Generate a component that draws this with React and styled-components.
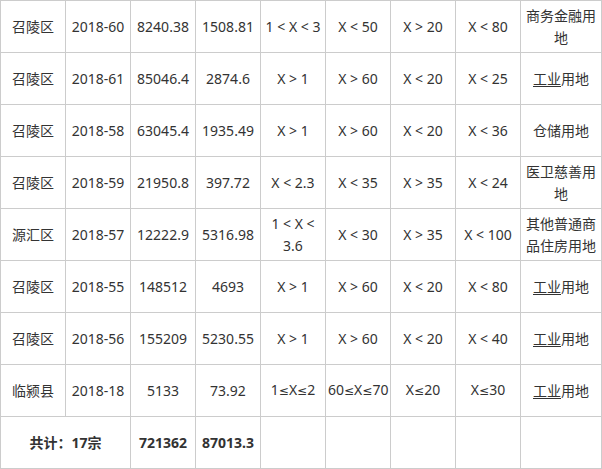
import React from 'react';
import styled, { createGlobalStyle } from 'styled-components';

const GlobalStyle = createGlobalStyle`
  html, body {
    margin: 0;
    padding: 0;
    background: #ffffff;
  }
  body {
    font-family: 'Noto Sans', 'DejaVu Sans', 'Noto Sans CJK SC', sans-serif;
    color: #333333;
  }
`;

/* 표 레이아웃 */
const Table = styled.table`
  border-collapse: collapse;
  table-layout: fixed;
  width: 601px;
  border-top: 1px solid #e8e8e8;
  border-left: 1px solid #e8e8e8;
`;

const Row = styled.tr`
  height: 52px;
`;

const Cell = styled.td`
  border: 1px solid #cccccc;
  padding: 0 2px;
  text-align: center;
  vertical-align: middle;
  font-size: 14px;
  line-height: 22px;
  white-space: nowrap;
  font-weight: ${(p) => (p.$bold ? 700 : 400)};
  color: #333333;
  box-sizing: border-box;
`;

const Link = styled.span`
  text-decoration: underline;
  text-underline-offset: 2px;
`;

const Le = styled.span`
  font-family: 'DejaVu Sans', sans-serif;
  font-size: 12px;
`;

const rows = [
  ['召陵区', '2018-60', '8240.38', '1508.81', '1 < X < 3', 'X < 50', 'X > 20', 'X < 80', ['商务金融用', '地']],
  ['召陵区', '2018-61', '85046.4', '2874.6', 'X > 1', 'X > 60', 'X < 20', 'X < 25', 'link'],
  ['召陵区', '2018-58', '63045.4', '1935.49', 'X > 1', 'X > 60', 'X < 20', 'X < 36', '仓储用地'],
  ['召陵区', '2018-59', '21950.8', '397.72', 'X < 2.3', 'X < 35', 'X > 35', 'X < 24', ['医卫慈善用', '地']],
  ['源汇区', '2018-57', '12222.9', '5316.98', ['1 < X <', '3.6'], 'X < 30', 'X > 35', 'X < 100', ['其他普通商', '品住房用地']],
  ['召陵区', '2018-55', '148512', '4693', 'X > 1', 'X > 60', 'X < 20', 'X < 80', 'link'],
  ['召陵区', '2018-56', '155209', '5230.55', 'X > 1', 'X > 60', 'X < 20', 'X < 40', 'link'],
  ['临颍县', '2018-18', '5133', '73.92', '1≤X≤2', '60≤X≤70', 'X≤20', 'X≤30', 'link'],
];

const renderValue = (v) => {
  if (v === 'link') {
    return (
      <>
        <Link>工业</Link>用地
      </>
    );
  }
  if (Array.isArray(v)) {
    return (
      <>
        {v[0]}
        <br />
        {v[1]}
      </>
    );
  }
  if (v.includes('≤')) {
    const parts = v.split('≤');
    return parts.map((p, i) => (
      <React.Fragment key={i}>
        {i > 0 && <Le>≤</Le>}
        {p}
      </React.Fragment>
    ));
  }
  return v;
};

const App = () => {
  return (
    <>
      <GlobalStyle />
      <Table>
        <colgroup>
          {Array.from({ length: 8 }).map((_, i) => (
            <col key={i} style={{ width: 65 }} />
          ))}
          <col style={{ width: 81 }} />
        </colgroup>
        <tbody>
          {rows.map((r, i) => (
            <Row key={i}>
              {r.map((v, j) => (
                <Cell key={j}>{renderValue(v)}</Cell>
              ))}
            </Row>
          ))}
          <Row>
            <Cell colSpan={2} $bold>共计：17宗</Cell>
            <Cell $bold>721362</Cell>
            <Cell $bold>87013.3</Cell>
            <Cell />
            <Cell />
            <Cell />
            <Cell />
            <Cell />
          </Row>
        </tbody>
      </Table>
    </>
  );
};

export default App;
